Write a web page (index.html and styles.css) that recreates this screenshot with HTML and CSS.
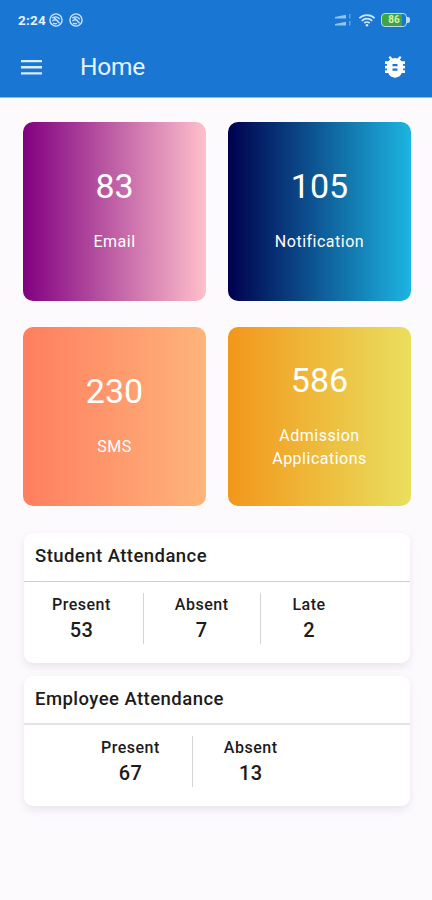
FILE: index.html
```html
<!DOCTYPE html>
<html lang="en">
<head>
  <meta charset="UTF-8" />
  <title>Home</title>
  <link rel="stylesheet" href="styles.css">
</head>
<body>

  <header>
    <div class="status-bar">
      <span class="time">2:24</span>
      <svg class="status-app" viewBox="0 0 14 14" aria-hidden="true"><circle cx="7" cy="7" r="6.1"/><path d="M3.2 5.2C5 3.2 9 3.4 10.8 6.4M3.4 8c2.1-2.2 4.5-1.5 6 1M4.8 4.2l5.8 6M4 10c1.4.9 2.6 1 4 .4"/></svg>
      <svg class="status-app second" viewBox="0 0 14 14" aria-hidden="true"><circle cx="7" cy="7" r="6.1"/><path d="M3.2 5.2C5 3.2 9 3.4 10.8 6.4M3.4 8c2.1-2.2 4.5-1.5 6 1M4.8 4.2l5.8 6M4 10c1.4.9 2.6 1 4 .4"/></svg>
      <div class="status-right">
        <svg class="signal" viewBox="0 0 17 14" aria-hidden="true"><path d="M0 5.500V4l11-2.200v3.700zM0 12.500V11l11-2.200v3.700z"/><path class="faint" d="M14 1h1.500v4.500H14zM14 8h1.500v4.500H14z"/></svg>
        <svg class="wifi" viewBox="0 0 18 14" aria-hidden="true"><path d="M1.300 5.200a11 11 0 0 1 15.400 0M3.800 7.800a7.400 7.400 0 0 1 10.400 0M6.300 10.200a3.900 3.900 0 0 1 5.400 0"/><circle cx="9" cy="12.200" r="1.300"/></svg>
        <div class="battery"><span>86</span></div>
      </div>
    </div>
    <div class="toolbar">
      <svg class="menu" viewBox="0 0 21 15" aria-hidden="true"><path d="M0 0h21v2.300H0zM0 6.100h21v2.300H0zM0 12.200h21v2.300H0z"/></svg>
      <h1>Home</h1>
      <svg class="bug" viewBox="0 0 20 22" aria-hidden="true"><path fill-rule="evenodd" d="M5 0l2.600 2.400a7 7 0 0 1 4.800 0L15 0l1.500 1.500-1.700 1.900Q16 4.200 16.600 5.300H20v2.800h-2v1.700h2v2.800h-2v1.700h2v2.800h-3.200C15.600 20 13 21.700 10 21.700S4.400 20 3.200 17.100H0v-2.800h2v-1.700H0V9.800h2V8.100H0V5.300h3.400Q4 4.200 5.200 3.400L3.500 1.500zM7.500 8v2.200h5V8zM7.500 12.500v2.200h5v-2.200z"/></svg>
    </div>
  </header>

  <main>
    <div class="tiles">
      <div class="tile email">
        <strong>83</strong>
        <span>Email</span>
      </div>
      <div class="tile notification">
        <strong>105</strong>
        <span>Notification</span>
      </div>
      <div class="tile sms">
        <strong>230</strong>
        <span>SMS</span>
      </div>
      <div class="tile admission">
        <strong>586</strong>
        <span>Admission<br>Applications</span>
      </div>
    </div>

    <section class="card">
      <h2>Student Attendance</h2>
      <div class="counts">
        <div class="count">
          <span>Present</span>
          <b>53</b>
        </div>
        <div class="count">
          <span>Absent</span>
          <b>7</b>
        </div>
        <div class="count">
          <span>Late</span>
          <b>2</b>
        </div>
      </div>
    </section>

    <section class="card employee">
      <h2>Employee Attendance</h2>
      <div class="counts">
        <div class="count">
          <span>Present</span>
          <b>67</b>
        </div>
        <div class="count">
          <span>Absent</span>
          <b>13</b>
        </div>
      </div>
    </section>
  </main>

</body>
</html>
```
FILE: styles.css
```css
* {
  box-sizing: border-box;
}

html, body {
  height: 100%;
  margin: 0;
  font-family: Roboto, sans-serif;
  background: #fdfafe;
  color: #1c1c1c;
}

header {
  height: 98px;
  background: #1976d2;
  border-bottom: 1px solid #8dbcf0;
  color: #e6f3ff;
}

.status-bar {
  display: flex;
  align-items: center;
  height: 39px;
  padding: 0 25px 0 18px;
}

.time {
  width: 31px;
  font-size: 13.5px;
  font-weight: 700;
  letter-spacing: 0.2px;
}

.status-app {
  width: 14px;
  height: 14px;
  fill: none;
  stroke: #c9e4fb;
  stroke-width: 1.4;
}

.status-app.second {
  margin-left: 6px;
}

.status-right {
  display: flex;
  align-items: center;
  margin-left: auto;
}

.signal {
  width: 17px;
  height: 14px;
  margin-right: 6px;
  fill: #8fc4f3;
}

.signal .faint {
  fill: #5da2e6;
}

.wifi {
  width: 18px;
  height: 14px;
  margin-right: 5px;
  fill: #cfe8fc;
}

.wifi path {
  fill: none;
  stroke: #cfe8fc;
  stroke-width: 1.8;
}

.battery {
  position: relative;
  width: 26px;
  height: 14px;
  border: 1.5px solid #b9dcf4;
  border-radius: 4px;
  background: linear-gradient(90deg, #3fa544 82%, #1976d2 82%);
  color: #d5f3b5;
  font-size: 10px;
  font-weight: 700;
  line-height: 12px;
  text-align: center;
}

.battery::after {
  content: "";
  position: absolute;
  top: 3px;
  right: -4px;
  width: 3px;
  height: 6px;
  border-radius: 0 2px 2px 0;
  background: #b9dcf4;
}

.toolbar {
  display: flex;
  align-items: center;
  height: 56px;
  padding: 0 27px 0 21px;
}

.menu {
  width: 21px;
  height: 15px;
  margin-right: 38px;
  fill: #d9edff;
}

h1 {
  margin: -2px 0 0;
  font-size: 24.5px;
  font-weight: 400;
  letter-spacing: -0.2px;
}

.bug {
  width: 20px;
  height: 22px;
  margin-left: auto;
  fill: #fff;
}

main {
  padding: 24px 21px 0 23px;
}

.tiles {
  display: grid;
  grid-template-columns: 1fr 1fr;
  grid-auto-rows: 179px;
  gap: 26px 22px;
}

.tile {
  display: flex;
  flex-direction: column;
  align-items: center;
  justify-content: center;
  padding-bottom: 4px;
  border-radius: 10px;
  color: #fff;
  text-align: center;
}

.tile strong {
  margin-bottom: 24px;
  font-size: 34px;
  font-weight: 400;
  line-height: 40px;
}

.tile span {
  font-size: 16px;
  letter-spacing: 0.5px;
  line-height: 23px;
}

.email {
  background: linear-gradient(90deg, #800080, #ffc0cb);
}

.notification {
  background: linear-gradient(90deg, #00004d, #1cb5e0);
}

.sms {
  background: linear-gradient(90deg, #ff7e5f, #feb47b);
}

.admission {
  background: linear-gradient(90deg, #f2971b, #eadf5e);
}

.card {
  height: 130px;
  margin: 27px 1px 0;
  border-radius: 9px;
  background: #fff;
  box-shadow: 0 4px 9px rgba(70, 50, 90, 0.1);
}

.card.employee {
  margin-top: 13px;
}

h2 {
  height: 49px;
  margin: 0;
  padding-left: 11px;
  border-bottom: 1px solid #cfcdd0;
  font-size: 18.5px;
  font-weight: 500;
  letter-spacing: 0.45px;
  line-height: 46px;
}

.employee h2 {
  border-bottom: 2px solid #e4e2e5;
}

.counts {
  display: flex;
  padding-top: 11px;
}

.employee .counts {
  padding-left: 49px;
}

.count {
  display: flex;
  flex-direction: column;
  align-items: center;
  height: 51px;
  padding: 0 32px 0 31px;
  border-left: 1px solid #d4d2d5;
}

.count:first-child {
  padding-left: 28px;
  border-left: none;
}

.count span {
  font-size: 16px;
  font-weight: 500;
  letter-spacing: 0.5px;
  line-height: 24px;
}

.count b {
  font-size: 20px;
  font-weight: 500;
  letter-spacing: 0.3px;
  line-height: 26px;
}
```
